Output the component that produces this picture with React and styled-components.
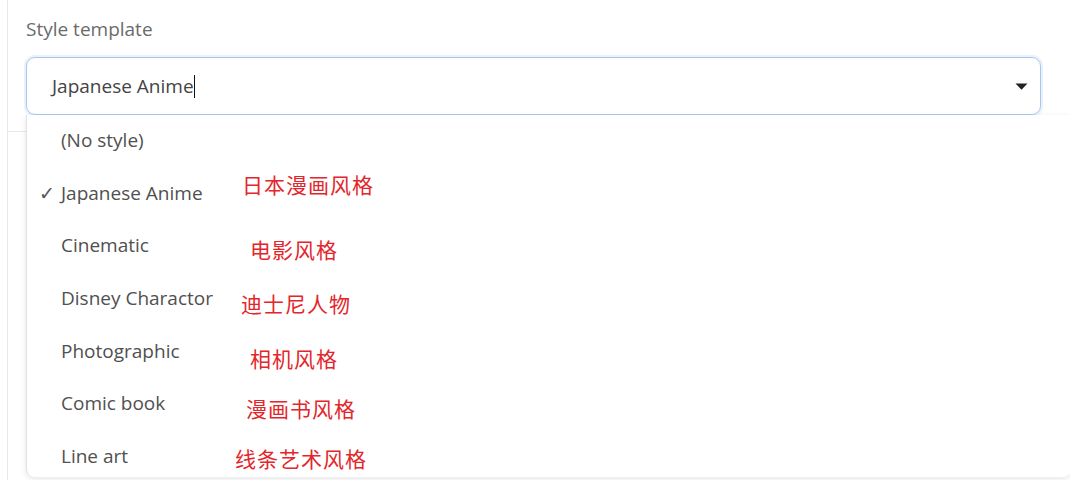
import React from 'react';
import styled, { createGlobalStyle } from 'styled-components';

const GlobalStyle = createGlobalStyle`
  body {
    margin: 0;
    background: #ffffff;
    font-family: "Open Sans", "Noto Sans", sans-serif;
  }
`;

const Panel = styled.div`
  position: relative;
  width: 1070px;
  height: 480px;
  overflow: hidden;
  box-sizing: border-box;
  margin-left: 7px;
  border-left: 1px solid #e8e8e8;
  padding: 19px 30px 0 18px;
`;

const Label = styled.div`
  font-size: 19px;
  color: #6b6b6b;
  line-height: 20px;
  height: 20px;
`;

const SelectWrap = styled.div`
  position: relative;
  margin-top: 18px;
  width: 1015px;
`;

const Input = styled.div`
  box-sizing: border-box;
  height: 58px;
  border: 1px solid #a8c7ea;
  border-radius: 9px;
  box-shadow: 0 0 0 2px rgba(190, 215, 245, 0.35);
  display: flex;
  align-items: center;
  justify-content: space-between;
  padding: 0 12px 0 25px;
  font-size: 19px;
  color: #444;
`;

const Caret = styled.span`
  display: inline-block;
  width: 1.5px;
  height: 23px;
  background: #111;
  vertical-align: -5px;
`;

const Arrow = styled.svg`
  width: 13px;
  height: 7px;
`;

const Below = styled.div`
  margin-left: -19px;
  margin-top: 16px;
  border-top: 1px solid #e8e8e8;
  width: 40px;
`;

const Menu = styled.div`
  position: absolute;
  left: 0;
  top: 58px;
  width: 1044px;
  height: 362px;
  background: #fff;
  border-left: 1px solid #e2e2e2;
  border-radius: 0 0 8px 8px;
  box-shadow: 0 2px 6px rgba(0, 0, 0, 0.1);
`;

const Item = styled.div`
  position: relative;
  height: 52.6px;
  display: flex;
  align-items: center;
  padding-left: 34px;
  font-size: 19px;
  color: #505050;
  margin-top: ${(p) => (p.first ? '-1px' : '0')};
`;

const Check = styled.span`
  position: absolute;
  left: 12px;
  color: #555;
  font-size: 19px;
`;

const Note = styled.span`
  position: absolute;
  left: ${(p) => p.x}px;
  top: ${(p) => p.y}px;
  font-family: "Noto Sans CJK SC", sans-serif;
  font-size: 21px;
  letter-spacing: 1px;
  color: #e3262b;
  line-height: 24px;
  white-space: nowrap;
`;

const items = [
  { label: '(No style)' },
  { label: 'Japanese Anime', checked: true, note: '日本漫画风格', x: 215, y: 5 },
  { label: 'Cinematic', note: '电影风格', x: 223, y: 18 },
  { label: 'Disney Charactor', note: '迪士尼人物', x: 214, y: 19 },
  { label: 'Photographic', note: '相机风格', x: 223, y: 22 },
  { label: 'Comic book', note: '漫画书风格', x: 219, y: 19 },
  { label: 'Line art', note: '线条艺术风格', x: 208, y: 16 },
];

export default function App() {
  return (
    <>
      <GlobalStyle />
      <Panel>
        <Label>Style template</Label>
        <SelectWrap>
          <Input>
            <span>
              Japanese Anime
              <Caret />
            </span>
            <Arrow viewBox="0 0 13 7">
              <path d="M0.5 0.5 L12.5 0.5 L6.5 6.8 Z" fill="#222" />
            </Arrow>
          </Input>
          <Below />
          <Menu>
            {items.map((it, i) => (
              <Item key={it.label} first={i === 0}>
                {it.checked && <Check>✓</Check>}
                {it.label}
                {it.note && (
                  <Note x={it.x} y={it.y}>
                    {it.note}
                  </Note>
                )}
              </Item>
            ))}
          </Menu>
        </SelectWrap>
      </Panel>
    </>
  );
}
